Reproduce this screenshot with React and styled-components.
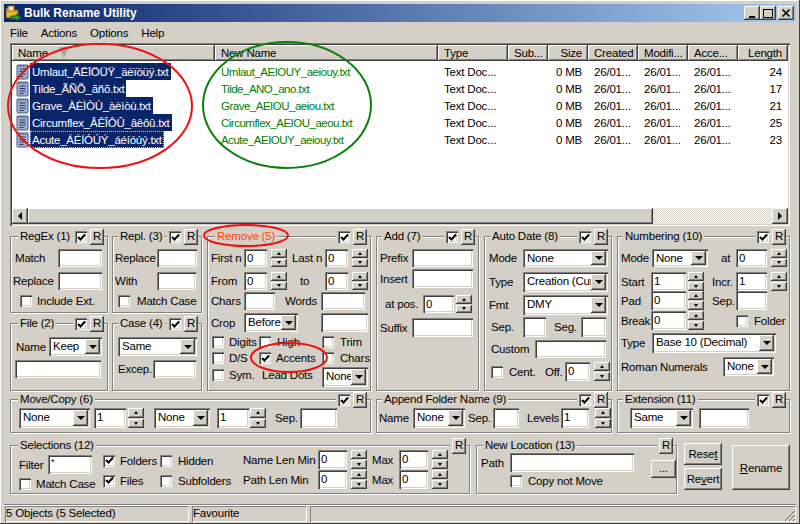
import React from 'react';
import styled, { createGlobalStyle } from 'styled-components';

const GlobalStyle = createGlobalStyle`
  html, body {
    margin: 0;
    padding: 0;
    background: #d4d0c8;
  }
`;

const raised = `
  background: #d4d0c8;
  box-shadow: inset -1px -1px #404040, inset 1px 1px #fff, inset -2px -2px #808080, inset 2px 2px #d4d0c8;
`;

const sunken = `
  box-shadow: inset 1px 1px #808080, inset 2px 2px #404040, inset -1px -1px #fff, inset -2px -2px #d4d0c8;
`;

const Window = styled.div`
  position: relative;
  box-sizing: border-box;
  width: 800px;
  height: 524px;
  padding: 4px 4px 0;
  overflow: hidden;
  background: #d4d0c8;
  font-family: "Liberation Sans", Arial, sans-serif;
  font-size: 11.5px;
  letter-spacing: -0.2px;
  color: #000;
  box-shadow: inset -1px -1px #404040, inset 1px 1px #fff;
`;

const TitleBar = styled.div`
  display: flex;
  align-items: center;
  height: 18px;
  padding: 0 2px 0 1px;
  background: linear-gradient(90deg, #0a246a, #a6caf0);
`;

const AppIcon = styled.svg`
  width: 18px;
  height: 18px;
  margin-right: 1px;
`;

const TitleText = styled.div`
  flex: 1;
  font-weight: bold;
  font-size: 12px;
  letter-spacing: 0;
  color: #fff;
`;

const CaptionButton = styled.div`
  ${raised}
  display: flex;
  align-items: center;
  justify-content: center;
  width: 16px;
  height: 14px;
  margin-left: ${(p) => p.$ml || 0}px;
`;

const MenuBar = styled.div`
  display: flex;
  align-items: center;
  height: 21px;
  padding-left: 6px;
  gap: 13px;
`;

const Content = styled.div`
  padding: 0 6px;
`;

const ListView = styled.div`
  ${sunken}
  display: flex;
  flex-direction: column;
  box-sizing: border-box;
  height: 183px;
  padding: 2px;
  background: #fff;
`;

const HeaderRow = styled.div`
  display: flex;
  height: 16px;
  background: #d4d0c8;
`;

const HeaderCell = styled.div`
  ${raised}
  position: relative;
  box-sizing: border-box;
  width: ${(p) => p.$w}px;
  padding: 0 6px;
  line-height: 16px;
  text-align: ${(p) => (p.$right ? 'right' : 'left')};
  white-space: nowrap;
`;

const SortMark = styled.span`
  position: absolute;
  left: 47px;
  top: 2px;
  width: 0;
  height: 0;
  border-left: 5px solid transparent;
  border-right: 5px solid transparent;
  border-top: 11px solid #a8a8a8;
`;

const ListBody = styled.div`
  flex: 1;
  padding-top: 2px;
`;

const FileRow = styled.div`
  display: flex;
  height: 17px;
  line-height: 18px;
  white-space: nowrap;
`;

const NameCell = styled.div`
  display: flex;
  align-items: center;
  box-sizing: border-box;
  width: 203px;
  padding-left: 4px;
`;

const FileIcon = styled.svg`
  width: 13px;
  height: 16px;
  margin-right: 1px;
`;

const SelectedName = styled.span`
  height: 17px;
  padding: 0 2px;
  background: #0a246a;
  color: #fff;
  letter-spacing: -0.25px;
  outline: ${(p) => (p.$focus ? '1px dotted #d4d0c8' : 'none')};
  outline-offset: -1px;
`;

const Cell = styled.div`
  box-sizing: border-box;
  width: ${(p) => p.$w}px;
  padding: 0 6px;
  text-align: ${(p) => (p.$right ? 'right' : 'left')};
`;

const NewNameCell = styled(Cell)`
  color: #008000;
  letter-spacing: -0.5px;
`;

const ScrollBar = styled.div`
  display: flex;
  height: 16px;
  background: repeating-conic-gradient(#fff 0 25%, #d4d0c8 0 50%) 0 0 / 2px 2px;
`;

const ScrollButton = styled.div`
  ${raised}
  display: flex;
  align-items: center;
  justify-content: center;
  width: 16px;
`;

const ScrollThumb = styled.div`
  ${raised}
  width: 625px;
  margin-right: auto;
`;

const Triangle = styled.span`
  width: 0;
  height: 0;
  border-style: solid;
  border-color: transparent;
  ${(p) => p.$dir === 'left' && `border-width: 4px 4px 4px 0; border-right-color: #000;`}
  ${(p) => p.$dir === 'right' && `border-width: 4px 0 4px 4px; border-left-color: #000;`}
  ${(p) => p.$dir === 'up' && `border-width: 0 2.5px 3px; border-bottom-color: #000;`}
  ${(p) => p.$dir === 'down' && `border-width: 3px 2.5px 0; border-top-color: #000;`}
  ${(p) => p.$dir === 'combo' && `border-width: 4px 4px 0; border-top-color: #000;`}
`;

const PanelRow = styled.div`
  display: flex;
  gap: 5px;
  margin-top: ${(p) => p.$mt || 0}px;
`;

const LeftStack = styled.div`
  display: grid;
  grid-template-columns: 98px 90px;
  grid-template-rows: 77px 68px;
  column-gap: 4px;
  row-gap: 10px;
`;

const Group = styled.div`
  position: relative;
  box-sizing: border-box;
  width: ${(p) => (p.$w ? `${p.$w}px` : 'auto')};
  height: ${(p) => (p.$h ? `${p.$h}px` : 'auto')};
  margin-left: ${(p) => p.$ml || 0}px;
  border: 1px solid #808080;
  box-shadow: inset 1px 1px #fff, 1px 1px #fff;
`;

const Legend = styled.div`
  position: absolute;
  left: ${(p) => p.$l || 5}px;
  top: -8px;
  padding: 0 2px;
  background: #d4d0c8;
  line-height: 14px;
  white-space: nowrap;
  color: ${(p) => p.$color || '#000'};
`;

const GroupTools = styled.div`
  position: absolute;
  right: 3px;
  top: -8px;
  display: flex;
  align-items: center;
  gap: 3px;
  padding-left: 2px;
  background: #d4d0c8;
`;

const ResetBox = styled.div`
  ${raised}
  width: 14px;
  height: 16px;
  line-height: 15px;
  text-align: center;
`;

const Row = styled.div`
  display: flex;
  align-items: center;
  height: ${(p) => p.$h}px;
  margin-top: ${(p) => p.$t || 0}px;
  padding-left: ${(p) => p.$l || 0}px;
`;

const Columns = styled.div`
  display: flex;
`;

const Column = styled.div`
  width: ${(p) => p.$w}px;
  padding-left: ${(p) => p.$l || 0}px;
  box-sizing: border-box;
`;

const Lbl = styled.span`
  flex: none;
  width: ${(p) => (p.$w ? `${p.$w}px` : 'auto')};
  margin-left: ${(p) => p.$ml || 0}px;
  padding-left: ${(p) => p.$pl || 0}px;
  box-sizing: border-box;
  white-space: nowrap;
`;

const Field = styled.div`
  ${sunken}
  flex: none;
  box-sizing: border-box;
  width: ${(p) => p.$w}px;
  height: 100%;
  margin-left: ${(p) => p.$ml || 0}px;
  padding: 2px 0 0 3px;
  background: #fff;
  font-size: ${(p) => (p.$small ? '9px' : 'inherit')};
  line-height: ${(p) => (p.$small ? '11px' : '15px')};
  overflow: hidden;
`;

const ComboBox = styled.div`
  ${sunken}
  flex: none;
  display: flex;
  align-self: ${(p) => (p.$top ? 'flex-start' : 'auto')};
  box-sizing: border-box;
  width: ${(p) => p.$w}px;
  height: ${(p) => (p.$top ? '20px' : '100%')};
  margin-left: ${(p) => p.$ml || 0}px;
  padding: 2px;
  background: #fff;
`;

const ComboText = styled.div`
  flex: 1;
  min-width: 0;
  padding-left: 2px;
  line-height: 15px;
  white-space: nowrap;
  overflow: hidden;
`;

const ComboArrow = styled.div`
  ${raised}
  flex: none;
  display: flex;
  align-items: center;
  justify-content: center;
  width: 15px;
`;

const SpinBox = styled.div`
  flex: none;
  display: flex;
  flex-direction: column;
  gap: 1px;
  width: 16px;
  height: 100%;
  margin-left: ${(p) => p.$ml || 0}px;
`;

const SpinButton = styled.div`
  ${raised}
  flex: 1;
  display: flex;
  align-items: center;
  justify-content: center;
`;

const TickBox = styled.div`
  ${sunken}
  flex: none;
  display: flex;
  align-items: center;
  justify-content: center;
  width: 12px;
  height: 12px;
  margin-left: ${(p) => p.$ml || 0}px;
  background: #fff;
`;

const LocationRow = styled.div`
  display: flex;
`;

const DotsButton = styled.div`
  ${raised}
  width: 26px;
  height: 18px;
  margin: 14px 0 0 12px;
  line-height: 17px;
  text-align: center;
`;

const ActionColumn = styled.div`
  display: flex;
  flex-direction: column;
  gap: 3px;
  width: 38px;
  margin: -2px 0 0 2px;
`;

const ActionButton = styled.div`
  ${raised}
  display: flex;
  align-items: center;
  justify-content: center;
  width: ${(p) => (p.$w ? `${p.$w}px` : 'auto')};
  height: ${(p) => p.$h}px;
  margin-left: ${(p) => p.$ml || 0}px;
`;

const StatusBar = styled.div`
  display: flex;
  gap: 3px;
  height: 16px;
  margin-top: 10px;
  padding: 1px 0 0 1px;
  border-top: 1px solid #808080;
  box-shadow: inset 0 1px #fff;
`;

const StatusPanel = styled.div`
  box-sizing: border-box;
  flex: ${(p) => (p.$w ? 'none' : 1)};
  position: relative;
  width: ${(p) => (p.$w ? `${p.$w}px` : 'auto')};
  padding-left: 1px;
  line-height: 14px;
  box-shadow: inset 1px 1px #808080, inset -1px -1px #fff;
`;

const Grip = styled.svg`
  position: absolute;
  right: 0;
  bottom: 0;
  width: 14px;
  height: 14px;
`;

const Marks = styled.svg`
  position: absolute;
  left: 0;
  top: 0;
  width: 800px;
  height: 524px;
  pointer-events: none;
`;

const Spin = ({ ml }) => (
  <SpinBox $ml={ml}>
    <SpinButton><Triangle $dir="up" /></SpinButton>
    <SpinButton><Triangle $dir="down" /></SpinButton>
  </SpinBox>
);

const Combo = ({ w, ml, top, children }) => (
  <ComboBox $w={w} $ml={ml} $top={top}>
    <ComboText>{children}</ComboText>
    <ComboArrow><Triangle $dir="combo" /></ComboArrow>
  </ComboBox>
);

const Tick = ({ on, ml }) => (
  <TickBox $ml={ml}>
    {on && (
      <svg width="9" height="9" viewBox="0 0 9 9">
        <path d="M1 4 L3.5 6.5 L8 1.5" fill="none" stroke="#000" strokeWidth="2" />
      </svg>
    )}
  </TickBox>
);

const Tools = ({ noTick }) => (
  <GroupTools>
    {!noTick && <Tick on />}
    <ResetBox>R</ResetBox>
  </GroupTools>
);

const TextFile = () => (
  <FileIcon viewBox="0 0 13 16">
    <rect x="1" y="1" width="11" height="14" rx="1" fill="#9fb0cc" stroke="#4a5a86" />
    <path d="M1 2 H12" stroke="#2c3a66" strokeDasharray="1 1" />
    <path d="M3.5 5 H9.5 M3.5 7.5 H9.5 M3.5 10 H9.5 M3.5 12.5 H7.5" stroke="#27356a" />
  </FileIcon>
);

const columns = [
  { title: 'Type', w: 70 },
  { title: 'Sub...', w: 40 },
  { title: 'Size', w: 40, right: true },
  { title: 'Created', w: 50 },
  { title: 'Modifi...', w: 50 },
  { title: 'Acce...', w: 50 },
  { title: 'Length', w: 50, right: true },
];

const files = [
  { name: 'Umlaut_ÄËÏÖÜŸ_äëïöüÿ.txt', next: 'Umlaut_AEIOUY_aeiouy.txt', length: 24 },
  { name: 'Tilde_ÃÑÕ_ãñõ.txt', next: 'Tilde_ANO_ano.txt', length: 17 },
  { name: 'Grave_ÀÈÌÒÙ_àèìòù.txt', next: 'Grave_AEIOU_aeiou.txt', length: 21 },
  { name: 'Circumflex_ÂÊÎÔÛ_âêôû.txt', next: 'Circumflex_AEIOU_aeou.txt', length: 25 },
  { name: 'Acute_ÁÉÍÓÚÝ_áéíóúý.txt', next: 'Acute_AEIOUY_aeiouy.txt', length: 23, focus: true },
];

export default function App() {
  return (
    <Window>
      <GlobalStyle />
      <TitleBar>
        <AppIcon viewBox="0 0 18 18">
          <path d="M1 4 L6 4 L7 6 L13 6 L13 14 L1 14 Z" fill="#e8b830" stroke="#6a4a10" />
          <rect x="3" y="2" width="6" height="5" fill="#f3e4b0" stroke="#a06820" />
          <path d="M6 12 L11 12 L11 10 L16 13.5 L11 17 L11 15 L6 15 Z" fill="#2aa23c" stroke="#0d5a1c" />
        </AppIcon>
        <TitleText>Bulk Rename Utility</TitleText>
        <CaptionButton>
          <svg width="10" height="10" viewBox="0 0 10 10"><path d="M2 9 H8" stroke="#000" strokeWidth="2" /></svg>
        </CaptionButton>
        <CaptionButton>
          <svg width="10" height="10" viewBox="0 0 10 10"><path d="M1 1.5 H9 M0.5 1 V9.5 H9.5 V1" fill="none" stroke="#000" /></svg>
        </CaptionButton>
        <CaptionButton $ml={2}>
          <svg width="10" height="10" viewBox="0 0 10 10"><path d="M1.5 1.5 L8.5 8.5 M8.5 1.5 L1.5 8.5" stroke="#000" strokeWidth="1.6" /></svg>
        </CaptionButton>
      </TitleBar>
      <MenuBar>
        <span>File</span>
        <span>Actions</span>
        <span>Options</span>
        <span>Help</span>
      </MenuBar>
      <Content>
        <ListView>
          <HeaderRow>
            <HeaderCell $w={203}>Name<SortMark /></HeaderCell>
            <HeaderCell $w={223}>New Name</HeaderCell>
            {columns.map((c) => (
              <HeaderCell key={c.title} $w={c.w} $right={c.right}>{c.title}</HeaderCell>
            ))}
          </HeaderRow>
          <ListBody>
            {files.map((file) => (
              <FileRow key={file.name}>
                <NameCell>
                  <TextFile />
                  <SelectedName $focus={file.focus}>{file.name}</SelectedName>
                </NameCell>
                <NewNameCell $w={223}>{file.next}</NewNameCell>
                <Cell $w={70}>Text Doc...</Cell>
                <Cell $w={40} />
                <Cell $w={40} $right>0 MB</Cell>
                <Cell $w={50}>26/01...</Cell>
                <Cell $w={50}>26/01...</Cell>
                <Cell $w={50}>26/01...</Cell>
                <Cell $w={50} $right>{file.length}</Cell>
              </FileRow>
            ))}
          </ListBody>
          <ScrollBar>
            <ScrollButton><Triangle $dir="left" /></ScrollButton>
            <ScrollThumb />
            <ScrollButton><Triangle $dir="right" /></ScrollButton>
          </ScrollBar>
        </ListView>

        <PanelRow $mt={10}>
          <LeftStack>
            <Group>
              <Legend $l={7}>RegEx (1)</Legend>
              <Tools />
              <Row $t={12} $h={18} $l={4}><Lbl $w={43}>Match</Lbl><Field $w={44} /></Row>
              <Row $t={5} $h={18} $l={2}><Lbl $w={45}>Replace</Lbl><Field $w={44} /></Row>
              <Row $t={5} $h={12} $l={9}><Tick /><Lbl $ml={5}>Include Ext.</Lbl></Row>
            </Group>
            <Group>
              <Legend>Repl. (3)</Legend>
              <Tools />
              <Row $t={12} $h={18} $l={2}><Lbl $w={42}>Replace</Lbl><Field $w={40} /></Row>
              <Row $t={5} $h={18} $l={2}><Lbl $w={42}>With</Lbl><Field $w={39} /></Row>
              <Row $t={5} $h={12} $l={5}><Tick /><Lbl $ml={7}>Match Case</Lbl></Row>
            </Group>
            <Group>
              <Legend $l={7}>File (2)</Legend>
              <Tools />
              <Row $t={13} $h={19} $l={5}><Lbl $w={33}>Name</Lbl><Combo w={53}>Keep</Combo></Row>
              <Row $t={4} $h={18} $l={4}><Field $w={86} /></Row>
            </Group>
            <Group>
              <Legend>Case (4)</Legend>
              <Tools />
              <Row $t={13} $h={19} $l={5}><Combo w={79}>Same</Combo></Row>
              <Row $t={4} $h={18} $l={5}><Lbl $w={35}>Excep.</Lbl><Field $w={43} /></Row>
            </Group>
          </LeftStack>

          <Group $w={164} $h={155}>
            <Legend $l={7} $color="#ff4a00">Remove (5)</Legend>
            <Tools />
            <Row $t={12} $h={18} $l={3}>
              <Lbl $w={33}>First n</Lbl><Field $w={23}>0</Field><Spin ml={4} />
              <Lbl $ml={5} $w={33}>Last n</Lbl><Field $w={23}>0</Field><Spin ml={4} />
            </Row>
            <Row $t={5} $h={18} $l={3}>
              <Lbl $w={33}>From</Lbl><Field $w={23}>0</Field><Spin ml={4} />
              <Lbl $ml={5} $w={33} $pl={8}>to</Lbl><Field $w={23}>0</Field><Spin ml={4} />
            </Row>
            <Row $t={2} $h={18} $l={3}>
              <Lbl $w={33}>Chars</Lbl><Field $w={31} />
              <Lbl $ml={10} $w={36}>Words</Lbl><Field $w={44} />
            </Row>
            <Row $t={3} $h={19} $l={3}>
              <Lbl $w={33}>Crop</Lbl><Combo w={54}>Before</Combo><Field $ml={23} $w={47} />
            </Row>
            <Row $t={4} $h={12} $l={4}>
              <Tick /><Lbl $ml={5} $w={30}>Digits</Lbl>
              <Tick /><Lbl $ml={6} $w={45}>High</Lbl>
              <Tick /><Lbl $ml={6}>Trim</Lbl>
            </Row>
            <Row $t={4} $h={12} $l={4}>
              <Tick /><Lbl $ml={5} $w={30}>D/S</Lbl>
              <Tick on /><Lbl $ml={5} $w={46}>Accents</Lbl>
              <Tick /><Lbl $ml={6}>Chars</Lbl>
            </Row>
            <Row $t={3} $h={16} $l={4}>
              <Tick /><Lbl $ml={5} $w={33}>Sym.</Lbl>
              <Lbl $w={60}>Lead Dots</Lbl><Combo w={46} top>None</Combo>
            </Row>
          </Group>

          <Group $w={103} $h={155}>
            <Legend>Add (7)</Legend>
            <Tools />
            <Row $t={12} $h={18} $l={3}><Lbl $w={32}>Prefix</Lbl><Field $w={61} /></Row>
            <Row $t={2} $h={19} $l={3}><Lbl $w={32}>Insert</Lbl><Field $w={61} /></Row>
            <Row $t={7} $h={18} $l={8}><Lbl $w={38}>at pos.</Lbl><Field $w={31}>0</Field><Spin ml={2} /></Row>
            <Row $t={5} $h={19} $l={3}><Lbl $w={32}>Suffix</Lbl><Field $w={61} /></Row>
          </Group>

          <Group $w={128} $h={155}>
            <Legend>Auto Date (8)</Legend>
            <Tools />
            <Row $t={12} $h={18} $l={4}><Lbl $w={34}>Mode</Lbl><Combo w={85}>None</Combo></Row>
            <Row $t={5} $h={20} $l={4}><Lbl $w={34}>Type</Lbl><Combo w={85}>Creation (Curr</Combo></Row>
            <Row $t={3} $h={20} $l={4}><Lbl $w={34}>Fmt</Lbl><Combo w={85}>DMY</Combo></Row>
            <Row $t={2} $h={20} $l={6}>
              <Lbl $w={32}>Sep.</Lbl><Field $w={23} /><Lbl $ml={8} $w={27}>Seg.</Lbl><Field $w={25} />
            </Row>
            <Row $t={3} $h={18} $l={6}><Lbl $w={44}>Custom</Lbl><Field $w={71} /></Row>
            <Row $t={4} $h={19} $l={6}>
              <Tick /><Lbl $ml={6} $w={36}>Cent.</Lbl><Lbl $w={20}>Off.</Lbl><Field $w={25}>0</Field><Spin ml={4} />
            </Row>
          </Group>

          <Group $w={173} $h={155}>
            <Legend>Numbering (10)</Legend>
            <Tools />
            <Row $t={12} $h={18} $l={3}>
              <Lbl $w={31}>Mode</Lbl><Combo w={56}>None</Combo><Lbl $w={28} $pl={13}>at</Lbl>
              <Field $w={31}>0</Field><Spin ml={4} />
            </Row>
            <Row $t={5} $h={19} $l={3}>
              <Lbl $w={30}>Start</Lbl><Field $w={35}>1</Field><Spin ml={2} />
              <Lbl $ml={8} $w={24}>Incr.</Lbl><Field $w={31}>1</Field><Spin ml={4} />
            </Row>
            <Row $h={19} $l={3}>
              <Lbl $w={30}>Pad</Lbl><Field $w={35}>0</Field><Spin ml={2} />
              <Lbl $ml={8} $w={24}>Sep.</Lbl><Field $w={31} />
            </Row>
            <Row $t={1} $h={19} $l={3}>
              <Lbl $w={30}>Break</Lbl><Field $w={35}>0</Field><Spin ml={2} />
              <Tick ml={32} /><Lbl $ml={6}>Folder</Lbl>
            </Row>
            <Row $t={3} $h={20} $l={3}><Lbl $w={31}>Type</Lbl><Combo w={124}>Base 10 (Decimal)</Combo></Row>
            <Row $t={4} $h={19} $l={3}><Lbl $w={102}>Roman Numerals</Lbl><Combo w={51}>None</Combo></Row>
          </Group>
        </PanelRow>

        <PanelRow $mt={8}>
          <Group $w={361} $h={34}>
            <Legend $l={7}>Move/Copy (6)</Legend>
            <Tools />
            <Row $t={8} $h={20} $l={8}>
              <Combo w={71}>None</Combo><Field $ml={4} $w={32}>1</Field><Spin ml={2} />
              <Combo ml={10} w={56}>None</Combo><Field $ml={7} $w={32}>1</Field><Spin ml={1} />
              <Lbl $ml={9} $w={25}>Sep.</Lbl><Field $w={37} />
            </Row>
          </Group>
          <Group $w={236} $h={34}>
            <Legend>Append Folder Name (9)</Legend>
            <Tools />
            <Row $t={8} $h={20} $l={2}>
              <Lbl $w={34}>Name</Lbl><Combo w={52}>None</Combo>
              <Lbl $ml={3} $w={25}>Sep.</Lbl><Field $w={26} />
              <Lbl $ml={8} $w={34}>Levels</Lbl><Field $w={28}>1</Field><Spin ml={6} />
            </Row>
          </Group>
          <Group $w={173} $h={34}>
            <Legend>Extension (11)</Legend>
            <Tools />
            <Row $t={8} $h={20} $l={12}><Combo w={63}>Same</Combo><Field $ml={6} $w={50} /></Row>
          </Group>
        </PanelRow>

        <PanelRow $mt={12}>
          <Group $w={460} $h={49}>
            <Legend $l={7}>Selections (12)</Legend>
            <Tools noTick />
            <Columns>
              <Column $w={92} $l={8}>
                <Row $t={9} $h={19}><Lbl $w={29}>Filter</Lbl><Field $w={44} $small>*</Field></Row>
                <Row $t={4} $h={12}><Tick /><Lbl $ml={5}>Match Case</Lbl></Row>
              </Column>
              <Column $w={140}>
                <Row $t={5} $h={19}><Tick on /><Lbl $ml={5} $w={40}>Folders</Lbl><Tick /><Lbl $ml={6}>Hidden</Lbl></Row>
                <Row $t={1} $h={19}><Tick on /><Lbl $ml={5} $w={40}>Files</Lbl><Tick /><Lbl $ml={6}>Subfolders</Lbl></Row>
              </Column>
              <Column $w={226}>
                <Row $t={4} $h={19}>
                  <Lbl $w={75}>Name Len Min</Lbl><Field $w={29}>0</Field><Spin ml={4} />
                  <Lbl $ml={5} $w={27}>Max</Lbl><Field $w={29}>0</Field><Spin ml={4} />
                </Row>
                <Row $t={1} $h={19}>
                  <Lbl $w={75}>Path Len Min</Lbl><Field $w={29}>0</Field><Spin ml={4} />
                  <Lbl $ml={5} $w={27}>Max</Lbl><Field $w={29}>0</Field><Spin ml={4} />
                </Row>
              </Column>
            </Columns>
          </Group>
          <Group $w={201} $h={49} $ml={1}>
            <Legend $l={6}>New Location (13)</Legend>
            <Tools noTick />
            <LocationRow>
              <Column $w={169} $l={4}>
                <Row $t={7} $h={19}><Lbl $w={29}>Path</Lbl><Field $w={124} /></Row>
                <Row $t={3} $h={12} $l={29}><Tick /><Lbl $ml={6}>Copy not Move</Lbl></Row>
              </Column>
              <DotsButton>...</DotsButton>
            </LocationRow>
          </Group>
          <ActionColumn>
            <ActionButton $h={22}><span>Rese<u>t</u></span></ActionButton>
            <ActionButton $h={22}><span>Re<u>v</u>ert</span></ActionButton>
          </ActionColumn>
          <ActionButton $w={58} $h={45} $ml={5}><span><u>R</u>ename</span></ActionButton>
        </PanelRow>
      </Content>

      <StatusBar>
        <StatusPanel $w={184}>5 Objects (5 Selected)</StatusPanel>
        <StatusPanel $w={115}>Favourite</StatusPanel>
        <StatusPanel>
          <Grip viewBox="0 0 14 14">
            <path d="M13 3 L3 13 M13 7 L7 13 M13 11 L11 13" stroke="#808080" strokeWidth="1.4" />
            <path d="M13 4.5 L4.5 13 M13 8.5 L8.5 13" stroke="#fff" />
          </Grip>
        </StatusPanel>
      </StatusBar>

      <Marks viewBox="0 0 800 524">
        <ellipse cx="100" cy="106" rx="92" ry="62" fill="none" stroke="#f01010" strokeWidth="2" />
        <ellipse cx="287" cy="105" rx="84" ry="63" fill="none" stroke="#0a800a" strokeWidth="2" />
        <ellipse cx="246" cy="235.5" rx="42" ry="10.5" fill="none" stroke="#f01010" strokeWidth="2" />
        <ellipse cx="289" cy="357.5" rx="38" ry="14.5" fill="none" stroke="#f01010" strokeWidth="2" />
      </Marks>
    </Window>
  );
}
